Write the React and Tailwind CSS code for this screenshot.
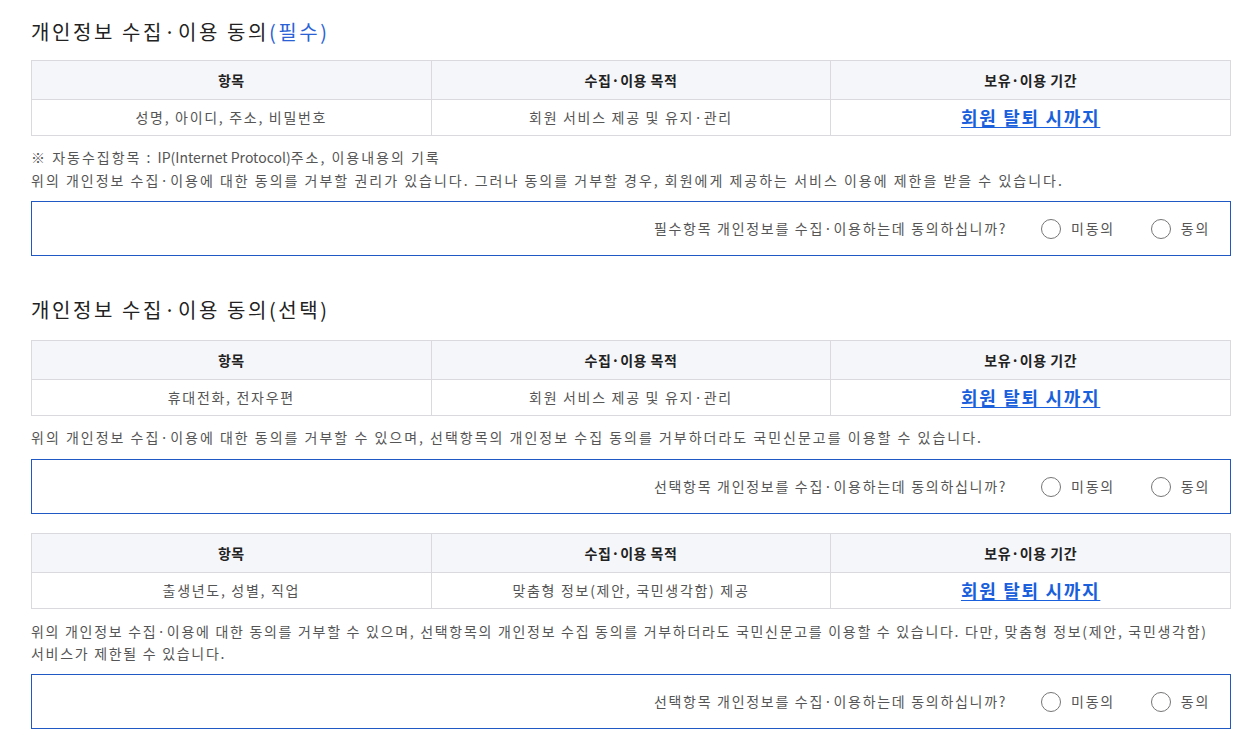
const font = { fontFamily: '"Malgun Gothic", "Noto Sans CJK KR", sans-serif' };

const Title = ({ children }) => (
  <h2 className="text-[20px] leading-[28px] text-[#222] font-normal tracking-[2.6px]">{children}</h2>
);

const InfoTable = ({ item, purpose }) => (
  <table className="w-full table-fixed border-collapse text-[14px]">
    <thead>
      <tr className="bg-[#f5f6fa]">
        <th className="h-[39px] border border-[#d9d9de] font-bold text-[#222] tracking-[0.5px]">항목</th>
        <th className="h-[39px] border border-[#d9d9de] font-bold text-[#222] tracking-[0.5px]">수집·이용 목적</th>
        <th className="h-[39px] border border-[#d9d9de] font-bold text-[#222] tracking-[0.5px]">보유·이용 기간</th>
      </tr>
    </thead>
    <tbody>
      <tr>
        <td className="h-[36px] border border-[#d9d9de] text-center text-[#555] tracking-[1.7px]">{item}</td>
        <td className="h-[36px] border border-[#d9d9de] text-center text-[#555] tracking-[1.7px]">{purpose}</td>
        <td className="h-[36px] border border-[#d9d9de] text-center">
          <a className="text-[18px] font-bold text-[#1a5fdc] underline underline-offset-2 tracking-[1.7px]">
            회원 탈퇴 시까지
          </a>
        </td>
      </tr>
    </tbody>
  </table>
);

const Radio = ({ label }) => (
  <label className="flex items-center gap-[10px]">
    <span className="w-[20px] h-[20px] rounded-full border border-[#767676] bg-white" />
    <span>{label}</span>
  </label>
);

const AgreeBox = ({ question }) => (
  <div className="h-[55px] border border-[#2058c4] flex items-center justify-end pr-[20px] text-[14px] text-[#555] tracking-[1.7px]">
    <span className="mr-[34px]">{question}</span>
    <div className="flex items-center gap-[36px]">
      <Radio label="미동의" />
      <Radio label="동의" />
    </div>
  </div>
);

export default function App() {
  return (
    <div className="bg-white w-[1248px] min-h-[746px] px-[31px] pt-[18px] break-keep" style={font}>
      <div className="w-[1200px]">
        <Title>
          개인정보 수집·이용 동의<span className="text-[#2a62d6]">(필수)</span>
        </Title>
        <div className="mt-[14px]">
          <InfoTable item="성명, 아이디, 주소, 비밀번호" purpose="회원 서비스 제공 및 유지·관리" />
        </div>
        <div className="mt-[10px] text-[14px] leading-[23px] text-[#555] tracking-[2px]">
          <p>
            ※ 자동수집항목 : <span className="tracking-normal">IP(Internet Protocol)</span>주소, 이용내용의 기록
          </p>
          <p>
            위의 개인정보 수집·이용에 대한 동의를 거부할 권리가 있습니다. 그러나 동의를 거부할 경우, 회원에게 제공하는 서비스 이용에 제한을 받을 수 있습니다.
          </p>
        </div>
        <div className="mt-[9px]">
          <AgreeBox question="필수항목 개인정보를 수집·이용하는데 동의하십니까?" />
        </div>

        <div className="mt-[40px]">
          <Title>개인정보 수집·이용 동의(선택)</Title>
        </div>
        <div className="mt-[16px]">
          <InfoTable item="휴대전화, 전자우편" purpose="회원 서비스 제공 및 유지·관리" />
        </div>
        <p className="mt-[10px] text-[14px] leading-[23px] text-[#555] tracking-[2px]">
          위의 개인정보 수집·이용에 대한 동의를 거부할 수 있으며, 선택항목의 개인정보 수집 동의를 거부하더라도 국민신문고를 이용할 수 있습니다.
        </p>
        <div className="mt-[10px]">
          <AgreeBox question="선택항목 개인정보를 수집·이용하는데 동의하십니까?" />
        </div>

        <div className="mt-[19px]">
          <InfoTable item="출생년도, 성별, 직업" purpose="맞춤형 정보(제안, 국민생각함) 제공" />
        </div>
        <p className="mt-[11px] text-[14px] leading-[22px] text-[#555] tracking-[1.7px]">
          위의 개인정보 수집·이용에 대한 동의를 거부할 수 있으며, 선택항목의 개인정보 수집 동의를 거부하더라도 국민신문고를 이용할 수 있습니다. 다만, 맞춤형 정보(제안, 국민생각함) 서비스가 제한될 수 있습니다.
        </p>
        <div className="mt-[10px]">
          <AgreeBox question="선택항목 개인정보를 수집·이용하는데 동의하십니까?" />
        </div>
      </div>
    </div>
  );
}
